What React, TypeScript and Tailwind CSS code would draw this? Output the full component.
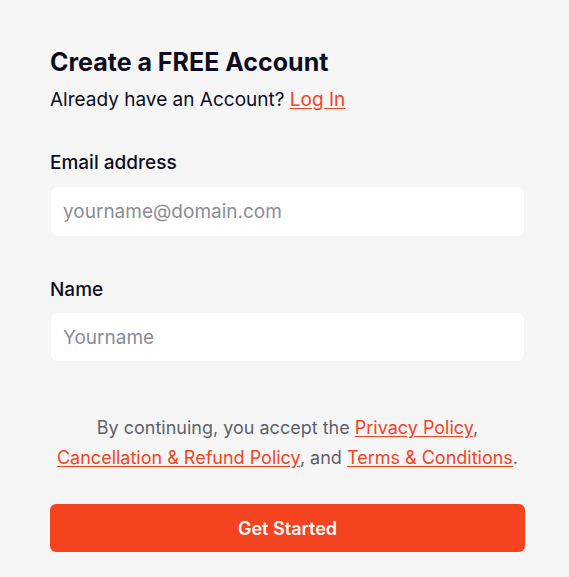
export default function App() {
  return (
    <div className="min-h-[577px] bg-[#f6f6f7] font-['Inter',sans-serif] text-[#0b0d1f]">
      <div className="w-[475px] ml-[50px] pt-[45px]">
        <h1 className="text-[25px] leading-[34px] font-bold">Create a FREE Account</h1>
        <p className="mt-[7px] text-[19px] leading-[28px]">
          Already have an Account?{' '}
          <a href="#" className="text-[#f4431f] underline underline-offset-2">
            Log In
          </a>
        </p>

        <label className="block mt-[35px] text-[19px] leading-[28px] font-medium">Email address</label>
        <input
          type="email"
          placeholder="yourname@domain.com"
          className="mt-[10px] ml-px block w-[473px] h-[49px] rounded-md bg-white px-[12px] text-[19px] shadow-[0_0_2px_rgba(0,0,0,0.04)] outline-none placeholder:text-[#8a8c96]"
        />

        <label className="block mt-[40px] text-[19px] leading-[28px] font-medium">Name</label>
        <input
          type="text"
          placeholder="Yourname"
          className="mt-[9px] ml-px block w-[473px] h-[48px] rounded-md bg-white px-[12px] text-[19px] shadow-[0_0_2px_rgba(0,0,0,0.04)] outline-none placeholder:text-[#8a8c96]"
        />

        <p className="mt-[52px] text-center text-[18px] leading-[30px] text-[#5f6169]">
          By continuing, you accept the{' '}
          <a href="#" className="text-[#f4431f] underline underline-offset-2">Privacy Policy</a>,{' '}
          <a href="#" className="text-[#f4431f] underline underline-offset-2">Cancellation &amp; Refund Policy</a>, and{' '}
          <a href="#" className="text-[#f4431f] underline underline-offset-2">Terms &amp; Conditions</a>.
        </p>

        <button className="mt-[31px] w-[475px] h-[48px] rounded-md bg-[#f4431f] text-white text-[18px] font-semibold">
          Get Started
        </button>
      </div>
    </div>
  );
}
